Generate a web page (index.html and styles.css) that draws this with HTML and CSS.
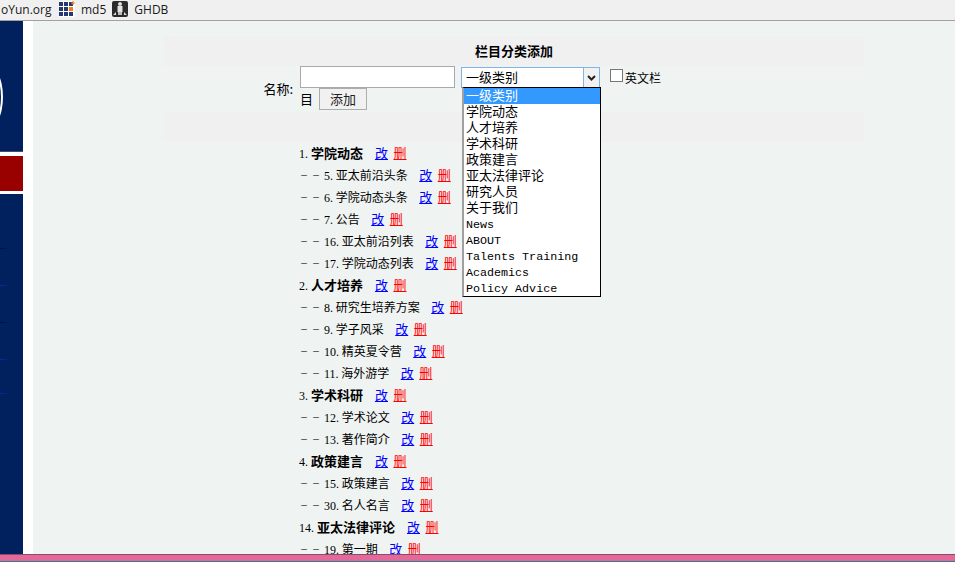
FILE: index.html
```html
<!DOCTYPE html>
<html lang="zh">
<head>
<meta charset="utf-8">
<title>栏目分类添加</title>
<link rel="stylesheet" href="styles.css">
</head>
<body>
<div class="bookmarks">
  <span class="bm-text bm-first">oYun.org</span>
  <svg class="bm-icon" width="16" height="16" viewBox="0 0 16 16"><rect width="16" height="16" fill="#fff"/><g fill="#24396f"><rect x="0" y="1" width="4" height="4"/><rect x="5" y="1" width="4" height="4"/><rect x="0" y="6" width="4" height="4"/><rect x="5" y="6" width="4" height="4"/><rect x="0" y="11" width="4" height="4"/><rect x="5" y="11" width="4" height="4"/><rect x="10" y="11" width="4" height="4"/></g><rect x="10" y="6" width="4" height="4" fill="#f07d1a"/><rect x="10" y="1" width="4" height="4" fill="#24396f"/><path d="M12 1.500h1.500V0h1v1.500H16v1h-1.500V4h-1V2.500H12z" fill="#f07d1a"/></svg>
  <span class="bm-text">md5</span>
  <svg class="bm-icon" width="16" height="16" viewBox="0 0 16 16"><rect width="16" height="16" rx="2" fill="#2b2b2b"/><circle cx="8" cy="3" r="2" fill="#ddd"/><rect x="5.500" y="5" width="5" height="6" fill="#e4e4e4"/><rect x="6" y="11" width="4" height="3" fill="#bbb"/><path d="M1 14l3-3v3zM15 14l-3-3v3z" fill="#ddd"/></svg>
  <span class="bm-text">GHDB</span>
</div>
<div class="page">
  <aside class="sidebar">
    <div class="logo-arc"></div>
    <div class="side-active"></div>
    <div class="side-line"></div>
    <div class="side-line"></div>
    <div class="side-line"></div>
    <div class="side-line"></div>
    <div class="side-line"></div>
  </aside>
  <main class="content">
    <div class="form-panel">
      <div class="band band-title">栏目分类添加</div>
      <div class="form-row">
        <div class="label">名称:</div>
        <div class="fields">
          <div class="fields-top">
            <input class="name-input" type="text" aria-label="名称">
            <div class="select">
              <span class="select-value">一级类别</span>
              <span class="select-arrow"><svg width="9" height="6" viewBox="0 0 9 6"><path d="M1 1l3.500 3.500L8 1" fill="none" stroke="#222" stroke-width="2"/></svg></span>
              <ul class="menu">
                <li class="selected">一级类别</li>
                <li>学院动态</li>
                <li>人才培养</li>
                <li>学术科研</li>
                <li>政策建言</li>
                <li>亚太法律评论</li>
                <li>研究人员</li>
                <li>关于我们</li>
                <li class="latin">News</li>
                <li class="latin">ABOUT</li>
                <li class="latin">Talents Training</li>
                <li class="latin">Academics</li>
                <li class="latin">Policy Advice</li>
              </ul>
            </div>
            <input class="check" type="checkbox" aria-label="英文栏目">
            <span class="check-label">英文栏</span>
          </div>
          <div class="fields-bottom">
            <span class="wrap-char">目</span>
            <button class="add-btn" type="button">添加</button>
          </div>
        </div>
      </div>
      <div class="band"></div>
    </div>
    <ul class="tree">
      <li class="top"><span class="num">1.</span> <b>学院动态</b><a class="edit" href="#">改</a><a class="del" href="#">删</a></li>
      <li><span class="dash">－－</span><span class="num">5.</span> 亚太前沿头条<a class="edit" href="#">改</a><a class="del" href="#">删</a></li>
      <li><span class="dash">－－</span><span class="num">6.</span> 学院动态头条<a class="edit" href="#">改</a><a class="del" href="#">删</a></li>
      <li><span class="dash">－－</span><span class="num">7.</span> 公告<a class="edit" href="#">改</a><a class="del" href="#">删</a></li>
      <li><span class="dash">－－</span><span class="num">16.</span> 亚太前沿列表<a class="edit" href="#">改</a><a class="del" href="#">删</a></li>
      <li><span class="dash">－－</span><span class="num">17.</span> 学院动态列表<a class="edit" href="#">改</a><a class="del" href="#">删</a></li>
      <li class="top"><span class="num">2.</span> <b>人才培养</b><a class="edit" href="#">改</a><a class="del" href="#">删</a></li>
      <li><span class="dash">－－</span><span class="num">8.</span> 研究生培养方案<a class="edit" href="#">改</a><a class="del" href="#">删</a></li>
      <li><span class="dash">－－</span><span class="num">9.</span> 学子风采<a class="edit" href="#">改</a><a class="del" href="#">删</a></li>
      <li><span class="dash">－－</span><span class="num">10.</span> 精英夏令营<a class="edit" href="#">改</a><a class="del" href="#">删</a></li>
      <li><span class="dash">－－</span><span class="num">11.</span> 海外游学<a class="edit" href="#">改</a><a class="del" href="#">删</a></li>
      <li class="top"><span class="num">3.</span> <b>学术科研</b><a class="edit" href="#">改</a><a class="del" href="#">删</a></li>
      <li><span class="dash">－－</span><span class="num">12.</span> 学术论文<a class="edit" href="#">改</a><a class="del" href="#">删</a></li>
      <li><span class="dash">－－</span><span class="num">13.</span> 著作简介<a class="edit" href="#">改</a><a class="del" href="#">删</a></li>
      <li class="top"><span class="num">4.</span> <b>政策建言</b><a class="edit" href="#">改</a><a class="del" href="#">删</a></li>
      <li><span class="dash">－－</span><span class="num">15.</span> 政策建言<a class="edit" href="#">改</a><a class="del" href="#">删</a></li>
      <li><span class="dash">－－</span><span class="num">30.</span> 名人名言<a class="edit" href="#">改</a><a class="del" href="#">删</a></li>
      <li class="top"><span class="num">14.</span> <b>亚太法律评论</b><a class="edit" href="#">改</a><a class="del" href="#">删</a></li>
      <li><span class="dash">－－</span><span class="num">19.</span> 第一期<a class="edit" href="#">改</a><a class="del" href="#">删</a></li>
    </ul>
  </main>
</div>
<div class="taskbar"></div>
</body>
</html>
```
FILE: styles.css
```css
* { box-sizing: border-box; }
html, body { margin: 0; height: 100%; overflow: hidden; }
body {
  display: flex;
  flex-direction: column;
  width: 955px;
  height: 562px;
  background: #fff;
  color: #000;
  font-family: "Noto Sans CJK SC", sans-serif;
  font-size: 12px;
}
.bookmarks {
  flex: 0 0 21px;
  display: flex;
  align-items: center;
  background: #f0f0f0;
  border-bottom: 1px solid #a0a0a0;
  overflow: hidden;
  padding-bottom: 2px;
}
.bm-text { flex: none; font-family: "Open Sans", "Liberation Sans", sans-serif; font-size: 12px; color: #1a1a1a; }
.bm-first { width: 53px; margin-right: 6px; padding-left: 1px; }
.bm-icon { flex: none; margin-right: 6px; }
.bm-text + .bm-icon { margin-left: 6px; }
.bm-first + .bm-icon { margin-left: 0; }
.page { flex: 1; display: flex; min-height: 0; }
.sidebar {
  flex: 0 0 23px;
  background: #00205e;
  position: relative;
  overflow: hidden;
}
.logo-arc {
  position: absolute;
  left: -30px;
  top: 43px;
  width: 33px;
  height: 66px;
  border: 2px solid #fff;
  border-radius: 50%;
  background: #00205e;
}
.side-active {
  position: absolute;
  left: 0;
  top: 131px;
  width: 23px;
  height: 42px;
  background: #990000;
  border-top: 4px solid #fff;
  border-bottom: 3px solid #fff;
  box-shadow: 0 -1px 0 #444a6e;
  background-clip: padding-box;
}
.side-line {
  position: absolute;
  left: 0;
  width: 10px;
  height: 1px;
  background: linear-gradient(90deg, #001a70, #00205e);
}
.side-line:nth-child(3) { top: 227px; background: linear-gradient(90deg, #00102e, #00205e); }
.side-line:nth-child(4) { top: 264px; background: linear-gradient(90deg, #0030a0, #00205e); }
.side-line:nth-child(5) { top: 301px; background: linear-gradient(90deg, #00102e, #00205e); }
.side-line:nth-child(6) { top: 338px; background: linear-gradient(90deg, #0030a0, #00205e); }
.side-line:nth-child(7) { top: 372px; background: linear-gradient(90deg, #0030a0, #00205e); }
.content {
  flex: 1;
  margin-left: 10px;
  background: #eff3f2;
  padding: 15px 0 0 131px;
  overflow: hidden;
  min-width: 0;
}
.form-panel { width: 700px; }
.band { height: 30px; background: #f0f0f0; }
.band-title { text-align: center; line-height: 30px; font-weight: 700; font-size: 13px; }
.form-row { height: 46px; display: flex; font-size: 13px; }
.label {
  width: 129px;
  text-align: right;
  font-size: 13px;
  line-height: 46px;
}
.fields { margin-left: 7px; width: 364px; display: flex; flex-direction: column; }
.fields-top { display: flex; align-items: flex-start; height: 23px; margin-bottom: -1px; position: relative; z-index: 1; }
.name-input {
  width: 155px;
  height: 22px;
  margin: 0;
  padding: 0 4px;
  background: #fff;
  border: 1px solid #a9a9a9;
  outline: 0;
  border-radius: 0;
}
.select {
  position: relative;
  width: 139px;
  height: 21px;
  margin-left: 6px;
  margin-top: 1px;
  display: flex;
  background: #fff;
  border: 1px solid #7eb4ea;
}
.select-value { flex: 1; padding-left: 4px; line-height: 17px; font-size: 13px; }
.select-arrow {
  flex: 0 0 16px;
  border-left: 1px solid #7eb4ea;
  background: #f1f1f1;
  display: flex;
  align-items: center;
  justify-content: center;
}
.menu {
  position: absolute;
  left: 0;
  top: 19px;
  width: 139px;
  height: 210px;
  margin: 0;
  padding: 0;
  list-style: none;
  background: #fff;
  border: 1px solid #000;
  border-left: 2px solid #a0a0a0;
  z-index: 2;
}
.menu li { height: 16px; line-height: 14px; padding-left: 2px; font-size: 13px; white-space: nowrap; }
.menu li.selected { background: #3399ff; color: #fff; }
.menu li.latin { font-family: "Liberation Mono", monospace; font-size: 11.700px; line-height: 18px; }
.check {
  appearance: none;
  width: 13px;
  height: 13px;
  margin: 3px 0 0 10px;
  flex: none;
  background: #fff;
  border: 1px solid #777;
  border-radius: 0;
}
.check-label { margin-left: 2px; line-height: 24px; font-size: 12px; }
.fields-bottom { display: flex; align-items: center; height: 22px; }
.wrap-char { margin-bottom: 2px; }
.add-btn {
  width: 48px;
  height: 22px;
  margin: 0 0 0 6px;
  padding: 0 0 2px;
  font: inherit;
  color: #222;
  background: #f1f1f1;
  border: 1px solid #adadad;
  border-radius: 0;
}
.tree {
  margin: 0;
  padding: 0 0 0 135px;
  list-style: none;
  line-height: 22px;
}
.tree li { height: 22px; white-space: nowrap; }
.num { font-family: "Liberation Serif", serif; font-size: 12px; }
.dash {
  display: inline-block;
  width: 25px;
  padding-left: 1px;
  font-size: 8px;
  letter-spacing: 4px;
  vertical-align: 2px;
  line-height: 1;
}
.tree b { font-weight: 700; }
.tree .top { font-size: 13px; }
.edit, .del { text-decoration: underline; font-size: 13px; }
.edit { color: #00f; margin-left: 11.500px; }
.top .edit { margin-left: 12px; }
.del { color: #f00; margin-left: 5.500px; }
.taskbar {
  flex: 0 0 8px;
  background: #e4699a;
  border-top: 1px solid #8a4a6c;
  border-bottom: 1px solid #2c7d8c;
}
```
